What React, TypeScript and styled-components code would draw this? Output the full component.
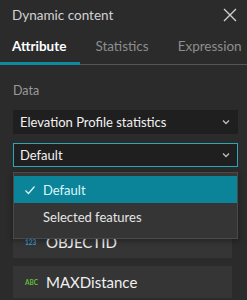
import styled, { createGlobalStyle } from 'styled-components';

const GlobalStyle = createGlobalStyle`
  html, body {
    margin: 0;
    padding: 0;
    background: #2b2b2b;
    font-family: Lato, "Open Sans", sans-serif;
  }
`;

const Panel = styled.div`
  width: 247px;
  height: 300px;
  background: #2b2b2b;
  overflow: hidden;
  display: flex;
  flex-direction: column;
`;

const Header = styled.div`
  height: 30px;
  display: flex;
  align-items: center;
  justify-content: space-between;
  padding: 0 8px 0 12px;
`;

const Title = styled.div`
  font-size: 13.5px;
  color: #d2d2d2;
`;

const Close = styled.button`
  background: none;
  border: 0;
  padding: 0;
  width: 18px;
  height: 18px;
  display: flex;
  align-items: center;
  justify-content: center;
`;

const Tabs = styled.div`
  display: flex;
  border-bottom: 1px solid #555;
  height: 33px;
  margin-top: 1px;
`;

const Tab = styled.div<{ $active?: boolean }>`
  padding: 0 14px 0 15px;
  font-size: 13.5px;
  line-height: 30px;
  white-space: nowrap;
  color: ${p => (p.$active ? '#ffffff' : '#8e8e8e')};
  font-weight: ${p => (p.$active ? 700 : 400)};
  border-bottom: 3px solid ${p => (p.$active ? '#0e8a9e' : 'transparent')};
  margin-bottom: -1px;

  &:first-child {
    padding-left: 12px;
  }
`;

const Body = styled.div`
  padding: 18px 9px 0 13px;
  display: flex;
  flex-direction: column;
`;

const Label = styled.div`
  font-size: 12.5px;
  color: #9a9a9a;
  margin-bottom: 12px;
`;

const Select = styled.div<{ $focus?: boolean }>`
  height: 24px;
  box-sizing: border-box;
  background: #1f1f1f;
  border: 1px solid ${p => (p.$focus ? '#2aa6b5' : '#1f1f1f')};
  display: flex;
  align-items: center;
  justify-content: space-between;
  padding: 0 6px;
  font-size: 13px;
  color: #f2f2f2;
  margin-bottom: 9px;
`;

const SelectWrap = styled.div`
  position: relative;
`;

const Menu = styled.div`
  position: absolute;
  top: 29px;
  left: 0;
  right: 0;
  background: #353535;
  border: 1px solid #4a4a4a;
  padding: 3px 0 8px;
  box-shadow: 0 2px 6px rgba(0, 0, 0, 0.35);
  z-index: 2;
`;

const Item = styled.div<{ $selected?: boolean }>`
  height: 27px;
  display: flex;
  align-items: center;
  padding-left: 10px;
  gap: 6px;
  font-size: 13px;
  color: ${p => (p.$selected ? '#dff6fa' : '#e6e6e6')};
  background: ${p => (p.$selected ? '#0b8399' : 'transparent')};
`;

const Check = styled.span`
  width: 13px;
  display: flex;
`;

const Fields = styled.div`
  display: flex;
  flex-direction: column;
  gap: 8px;
  margin-top: 50px;
  margin-right: 6px;
`;

const Field = styled.div`
  height: 32px;
  background: #353535;
  display: flex;
  align-items: center;
  padding-left: 12px;
  gap: 9px;
  font-size: 15px;
  color: #f0f0f0;
`;

const TypeTag = styled.span<{ $color: string }>`
  font-size: 6.5px;
  font-weight: 700;
  color: ${p => p.$color};
  width: 12px;
`;

const Chevron = () => (
  <svg width="10" height="10" viewBox="0 0 10 10">
    <path d="M2 3.5 L5 6.5 L8 3.5" fill="none" stroke="#bdbdbd" strokeWidth="1.3" />
  </svg>
);

export default function App() {
  return (
    <Panel>
      <GlobalStyle />
      <Header>
        <Title>Dynamic content</Title>
        <Close>
          <svg width="16" height="16" viewBox="0 0 16 16">
            <path d="M2 2 L14 14 M14 2 L2 14" stroke="#cfcfcf" strokeWidth="1.4" />
          </svg>
        </Close>
      </Header>
      <Tabs>
        <Tab $active>Attribute</Tab>
        <Tab>Statistics</Tab>
        <Tab>Expression</Tab>
      </Tabs>
      <Body>
        <Label>Data</Label>
        <Select>
          Elevation Profile statistics
          <Chevron />
        </Select>
        <SelectWrap>
          <Select $focus>
            Default
            <Chevron />
          </Select>
          <Menu>
            <Item $selected>
              <Check>
                <svg width="12" height="12" viewBox="0 0 12 12">
                  <path d="M1.5 6.5 L4.5 9.5 L10.5 2.5" fill="none" stroke="#dff6fa" strokeWidth="1.2" />
                </svg>
              </Check>
              Default
            </Item>
            <Item>
              <Check />
              Selected features
            </Item>
          </Menu>
        </SelectWrap>
        <Fields>
          <Field>
            <TypeTag $color="#3a9bd6">123</TypeTag>
            OBJECTID
          </Field>
          <Field>
            <TypeTag $color="#5fbf3a">ABC</TypeTag>
            MAXDistance
          </Field>
        </Fields>
      </Body>
    </Panel>
  );
}
